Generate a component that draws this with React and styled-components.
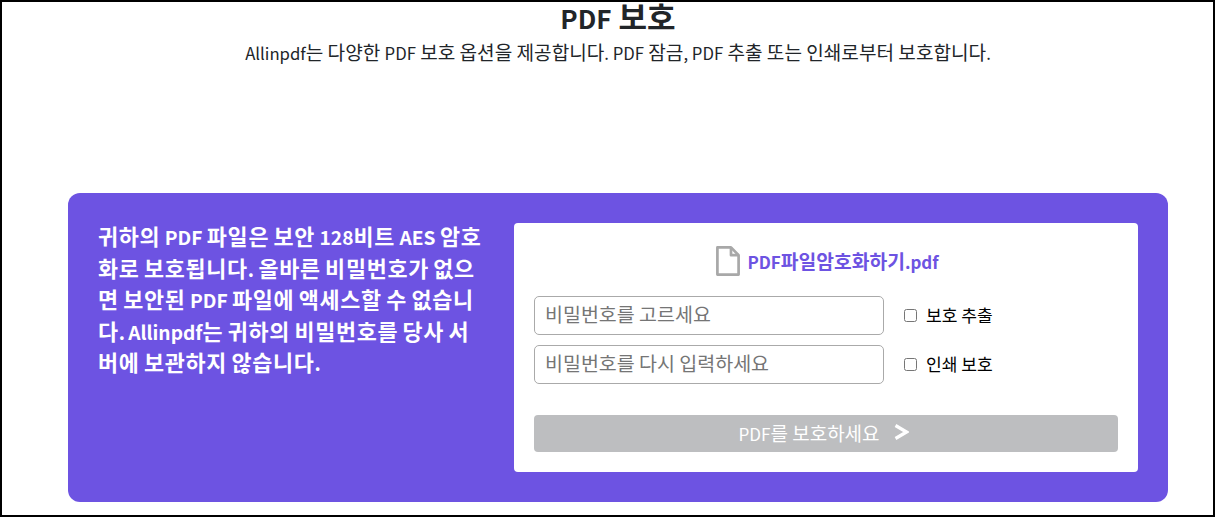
import styled, { createGlobalStyle } from "styled-components";

const GlobalStyle = createGlobalStyle`
  html, body {
    margin: 0;
    padding: 0;
    background: #fff;
  }
  body {
    font-family: "Noto Sans CJK KR", "Noto Sans", sans-serif;
    color: #212529;
  }
  * {
    box-sizing: border-box;
  }
`;

const Frame = styled.div`
  width: 1215px;
  height: 517px;
  border: 2px solid #000;
  padding-left: 21px;
  overflow: hidden;
`;

const Header = styled.header`
  text-align: center;
`;

// latin runs sit smaller than the hangul around them
const Latin = styled.span`
  font-size: ${({ $scale }) => $scale || 0.88}em;
  line-height: 0;
  letter-spacing: 0;
`;

const Title = styled.h1`
  margin: 0;
  font-size: 31px;
  line-height: 28px;
  font-weight: 700;
  color: #212529;
`;

const Subtitle = styled.p`
  margin: 10px 0 0;
  font-size: 19.1px;
  line-height: 24px;
  font-weight: 400;
  color: #212529;
`;

const Panel = styled.section`
  width: 1100px;
  height: 309px;
  margin: 129px auto 0;
  padding: 30px;
  display: flex;
  justify-content: space-between;
  background: #6d53e2;
  border-radius: 12px;
`;

const Intro = styled.p`
  width: 390px;
  margin: -3px 0 0;
  font-size: 21.8px;
  letter-spacing: 0.7px;
  word-spacing: -1.2px;
  line-height: 31.6px;
  font-weight: 700;
  color: #fff;
`;

const Card = styled.form`
  width: 624px;
  height: 249px;
  padding: 20px;
  background: #fff;
  border-radius: 4px;
`;

const FileRow = styled.div`
  height: 36px;
  margin-bottom: 17px;
  padding-left: 3px;
  display: flex;
  align-items: center;
  justify-content: center;
  gap: 7px;
`;

const FileName = styled.span`
  font-size: 19.3px;
  font-weight: 700;
  color: #6d53e2;
`;

const Fields = styled.div`
  display: flex;
  flex-direction: column;
  gap: 10px;
`;

const FieldRow = styled.div`
  display: flex;
  align-items: center;
  gap: 20px;
`;

const PasswordInput = styled.input`
  width: 350px;
  height: 39px;
  padding: 0 10px 4px;
  border: 1px solid #aaa;
  border-radius: 5px;
  outline: none;
  font-family: inherit;
  font-size: 19.5px;
  background: #fff;
  &::placeholder {
    color: #757575;
  }
`;

const CheckLabel = styled.label`
  display: flex;
  align-items: center;
  gap: 9px;
  padding-bottom: 2px;
  font-size: 17.1px;
  color: #000;
`;

const Check = styled.input`
  width: 13px;
  height: 13px;
  margin: 2px 0 0;
`;

const SubmitButton = styled.button`
  width: 584px;
  height: 37px;
  margin-top: 31px;
  padding: 0 5px 3px 0;
  display: flex;
  align-items: center;
  justify-content: center;
  gap: 14px;
  border: 0;
  border-radius: 4px;
  background: #bdbec0;
  color: #fff;
  font-family: inherit;
  font-size: 19px;
`;

function FileIcon() {
  return (
    <svg width="24" height="30" viewBox="0 0 24 30" fill="none" stroke="#a8a8a8" strokeWidth="2.7" strokeLinejoin="round">
      <path d="M1.4 1.4H15L22.6 9.2V28.6H1.4Z" />
      <path d="M15 1.4V9.2H22.6" />
    </svg>
  );
}

function ChevronIcon() {
  return (
    <svg width="15" height="16" viewBox="0 0 15 16" fill="none" stroke="#fff" strokeWidth="3.2" strokeLinejoin="miter">
      <path d="M1.5 1.5L12.5 8L1.5 14.5" />
    </svg>
  );
}

export default function App() {
  return (
    <>
      <GlobalStyle />
      <Frame>
        <Header>
          <Title><Latin $scale={0.84}>PDF</Latin> 보호</Title>
          <Subtitle>
            <Latin $scale={0.875}>Allinpdf</Latin>는 다양한 <Latin $scale={0.875}>PDF</Latin> 보호 옵션을 제공합니다<Latin $scale={0.875}>. PDF</Latin> 잠금<Latin $scale={0.875}>, PDF</Latin> 추출 또는 인쇄로부터 보호합니다<Latin $scale={0.875}>.</Latin>
          </Subtitle>
        </Header>
        <Panel>
          <Intro>
            귀하의 <Latin>PDF</Latin> 파일은 보안 <Latin>128</Latin>비트 <Latin>AES</Latin> 암호화로 보호됩니다<Latin>.</Latin> 올바른 비밀번호가 없으면 보안된 <Latin>PDF</Latin> 파일에 액세스할 수 없습니다<Latin>. Allinpdf</Latin>는 귀하의 비밀번호를 당사 서버에 보관하지 않습니다<Latin>.</Latin>
          </Intro>
          <Card>
            <FileRow>
              <FileIcon />
              <FileName>
                <Latin>PDF</Latin>파일암호화하기<Latin>.pdf</Latin>
              </FileName>
            </FileRow>
            <Fields>
              <FieldRow>
                <PasswordInput type="password" placeholder="비밀번호를 고르세요" />
                <CheckLabel>
                  <Check type="checkbox" />
                  보호 추출
                </CheckLabel>
              </FieldRow>
              <FieldRow>
                <PasswordInput type="password" placeholder="비밀번호를 다시 입력하세요" />
                <CheckLabel>
                  <Check type="checkbox" />
                  인쇄 보호
                </CheckLabel>
              </FieldRow>
            </Fields>
            <SubmitButton type="button">
              <span><Latin $scale={0.9}>PDF</Latin>를 보호하세요</span>
              <ChevronIcon />
            </SubmitButton>
          </Card>
        </Panel>
      </Frame>
    </>
  );
}
